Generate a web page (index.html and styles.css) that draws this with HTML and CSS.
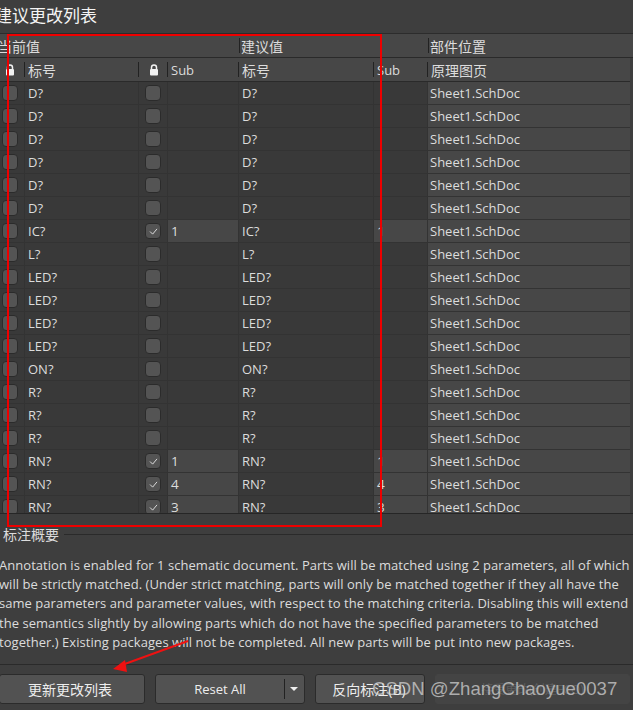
FILE: index.html
```html
<!DOCTYPE html>
<html lang="zh">
<head>
<meta charset="utf-8">
<title>建议更改列表</title>
<link rel="stylesheet" href="styles.css">
</head>
<body>
<div class="page">
  <h1 class="title">建议更改列表</h1>
  <div class="table">
    <div class="group-row">
      <div class="group g1"><span class="shift">当前值</span></div>
      <div class="group g2"><span>建议值</span></div>
      <div class="group g3"><span>部件位置</span></div>
    </div>
    <div class="row head">
      <div class="cell c-lock"><svg class="lock" viewBox="0 0 10 12"><path d="M2.5 5V3.4a2.5 2.5 0 0 1 5 0V5" fill="none" stroke="#f2f2f2" stroke-width="1.5"/><rect x="1" y="5" width="8" height="6.5" rx="1" fill="#f2f2f2"/></svg></div>
      <div class="cell zh">标号</div>
      <div class="cell c-lock"><svg class="lock" viewBox="0 0 10 12"><path d="M2.5 5V3.4a2.5 2.5 0 0 1 5 0V5" fill="none" stroke="#f2f2f2" stroke-width="1.5"/><rect x="1" y="5" width="8" height="6.5" rx="1" fill="#f2f2f2"/></svg></div>
      <div class="cell">Sub</div>
      <div class="cell zh">标号</div>
      <div class="cell">Sub</div>
      <div class="cell zh">原理图页</div>
    </div>
    <div class="row"><div class="cell c-box"><i class="box"></i></div><div class="cell">D?</div><div class="cell c-box"><i class="box"></i></div><div class="cell"></div><div class="cell">D?</div><div class="cell"></div><div class="cell sheet">Sheet1.SchDoc</div></div>
    <div class="row"><div class="cell c-box"><i class="box"></i></div><div class="cell">D?</div><div class="cell c-box"><i class="box"></i></div><div class="cell"></div><div class="cell">D?</div><div class="cell"></div><div class="cell sheet">Sheet1.SchDoc</div></div>
    <div class="row"><div class="cell c-box"><i class="box"></i></div><div class="cell">D?</div><div class="cell c-box"><i class="box"></i></div><div class="cell"></div><div class="cell">D?</div><div class="cell"></div><div class="cell sheet">Sheet1.SchDoc</div></div>
    <div class="row"><div class="cell c-box"><i class="box"></i></div><div class="cell">D?</div><div class="cell c-box"><i class="box"></i></div><div class="cell"></div><div class="cell">D?</div><div class="cell"></div><div class="cell sheet">Sheet1.SchDoc</div></div>
    <div class="row"><div class="cell c-box"><i class="box"></i></div><div class="cell">D?</div><div class="cell c-box"><i class="box"></i></div><div class="cell"></div><div class="cell">D?</div><div class="cell"></div><div class="cell sheet">Sheet1.SchDoc</div></div>
    <div class="row"><div class="cell c-box"><i class="box"></i></div><div class="cell">D?</div><div class="cell c-box"><i class="box"></i></div><div class="cell"></div><div class="cell">D?</div><div class="cell"></div><div class="cell sheet">Sheet1.SchDoc</div></div>
    <div class="row"><div class="cell c-box"><i class="box"></i></div><div class="cell">IC?</div><div class="cell c-box"><i class="box on"><svg viewBox="0 0 10 8"><path d="M1 4l3 3 5-6" fill="none" stroke="#e0e0e0" stroke-width="1.1"/></svg></i></div><div class="cell sub">1</div><div class="cell">IC?</div><div class="cell sub">1</div><div class="cell sheet">Sheet1.SchDoc</div></div>
    <div class="row"><div class="cell c-box"><i class="box"></i></div><div class="cell">L?</div><div class="cell c-box"><i class="box"></i></div><div class="cell"></div><div class="cell">L?</div><div class="cell"></div><div class="cell sheet">Sheet1.SchDoc</div></div>
    <div class="row"><div class="cell c-box"><i class="box"></i></div><div class="cell">LED?</div><div class="cell c-box"><i class="box"></i></div><div class="cell"></div><div class="cell">LED?</div><div class="cell"></div><div class="cell sheet">Sheet1.SchDoc</div></div>
    <div class="row"><div class="cell c-box"><i class="box"></i></div><div class="cell">LED?</div><div class="cell c-box"><i class="box"></i></div><div class="cell"></div><div class="cell">LED?</div><div class="cell"></div><div class="cell sheet">Sheet1.SchDoc</div></div>
    <div class="row"><div class="cell c-box"><i class="box"></i></div><div class="cell">LED?</div><div class="cell c-box"><i class="box"></i></div><div class="cell"></div><div class="cell">LED?</div><div class="cell"></div><div class="cell sheet">Sheet1.SchDoc</div></div>
    <div class="row"><div class="cell c-box"><i class="box"></i></div><div class="cell">LED?</div><div class="cell c-box"><i class="box"></i></div><div class="cell"></div><div class="cell">LED?</div><div class="cell"></div><div class="cell sheet">Sheet1.SchDoc</div></div>
    <div class="row"><div class="cell c-box"><i class="box"></i></div><div class="cell">ON?</div><div class="cell c-box"><i class="box"></i></div><div class="cell"></div><div class="cell">ON?</div><div class="cell"></div><div class="cell sheet">Sheet1.SchDoc</div></div>
    <div class="row"><div class="cell c-box"><i class="box"></i></div><div class="cell">R?</div><div class="cell c-box"><i class="box"></i></div><div class="cell"></div><div class="cell">R?</div><div class="cell"></div><div class="cell sheet">Sheet1.SchDoc</div></div>
    <div class="row"><div class="cell c-box"><i class="box"></i></div><div class="cell">R?</div><div class="cell c-box"><i class="box"></i></div><div class="cell"></div><div class="cell">R?</div><div class="cell"></div><div class="cell sheet">Sheet1.SchDoc</div></div>
    <div class="row"><div class="cell c-box"><i class="box"></i></div><div class="cell">R?</div><div class="cell c-box"><i class="box"></i></div><div class="cell"></div><div class="cell">R?</div><div class="cell"></div><div class="cell sheet">Sheet1.SchDoc</div></div>
    <div class="row"><div class="cell c-box"><i class="box"></i></div><div class="cell">RN?</div><div class="cell c-box"><i class="box on"><svg viewBox="0 0 10 8"><path d="M1 4l3 3 5-6" fill="none" stroke="#e0e0e0" stroke-width="1.1"/></svg></i></div><div class="cell sub">1</div><div class="cell">RN?</div><div class="cell sub">1</div><div class="cell sheet">Sheet1.SchDoc</div></div>
    <div class="row"><div class="cell c-box"><i class="box"></i></div><div class="cell">RN?</div><div class="cell c-box"><i class="box on"><svg viewBox="0 0 10 8"><path d="M1 4l3 3 5-6" fill="none" stroke="#e0e0e0" stroke-width="1.1"/></svg></i></div><div class="cell sub">4</div><div class="cell">RN?</div><div class="cell sub">4</div><div class="cell sheet">Sheet1.SchDoc</div></div>
    <div class="row"><div class="cell c-box"><i class="box"></i></div><div class="cell">RN?</div><div class="cell c-box"><i class="box on"><svg viewBox="0 0 10 8"><path d="M1 4l3 3 5-6" fill="none" stroke="#e0e0e0" stroke-width="1.1"/></svg></i></div><div class="cell sub">3</div><div class="cell">RN?</div><div class="cell sub">3</div><div class="cell sheet">Sheet1.SchDoc</div></div>
  </div>
  <section class="summary">
    <div class="legend"><span>标注概要</span><i class="legend-line"></i></div>
    <p class="desc">Annotation is enabled for 1 schematic document. Parts will be matched using 2 parameters, all of which<br>will be strictly matched. (Under strict matching, parts will only be matched together if they all have the<br>same parameters and parameter values, with respect to the matching criteria. Disabling this will extend<br>the semantics slightly by allowing parts which do not have the specified parameters to be matched<br>together.) Existing packages will not be completed. All new parts will be put into new packages.</p>
  </section>
  <footer class="actions">
    <button class="btn btn-update">更新更改列表</button>
    <div class="btn btn-split"><span class="split-label">Reset All</span><span class="split-arrow"><i class="caret"></i></span></div>
    <button class="btn btn-back">反向标注(B)</button>
    <button class="btn btn-ghost"><span>接受更改(创建ECO)</span></button>
  </footer>
</div>
<div class="red-box"></div>
<svg class="arrow" viewBox="0 0 80 40" width="80" height="40"><path d="M78 1L12 25" stroke="#ee1111" stroke-width="2" fill="none"/><path d="M3 29L15 20 17 32Z" fill="#ee1111"/></svg>
<div class="watermark">CSDN @ZhangChaoyue0037</div>
</body>
</html>
```

FILE: styles.css
```css
* { box-sizing: border-box; }
html, body { margin: 0; height: 100%; }
body {
  background: #3e3e3e;
  color: #dcdcdc;
  font-family: "Open Sans", "Noto Sans CJK SC", sans-serif;
  font-size: 13px;
  overflow: hidden;
  position: relative;
}
.page { width: 633px; height: 710px; display: flex; flex-direction: column; overflow: hidden; }
.title {
  margin: 0 0 0 -5px;
  height: 33px;
  padding-top: 3px;
  font-size: 17px;
  line-height: 24px;
  font-weight: 400;
  color: #f4f4f4;
  font-family: "Noto Sans CJK SC", sans-serif;
}
.table {
  height: 481px;
  overflow: hidden;
  border-top: 1px solid #2c2c2c;
  border-bottom: 1px solid #262626;
  flex: none;
}
.group-row {
  display: grid;
  grid-template-columns: 239px 189px 202px 3px;
  height: 24px;
  background: #474747;
  border-bottom: 1px solid #2a2a2a;
}
.group { display: flex; align-items: center; padding-left: 2px; font-family: "Noto Sans CJK SC", sans-serif; font-size: 14px; position: relative; }
.g1 { padding-left: 0; }
.shift { margin-left: -2px; }
.g2::before, .g3::before { content: ""; position: absolute; left: 0; top: 4px; bottom: 4px; width: 1px; background: #222; }
.row {
  display: grid;
  grid-template-columns: 25px 114px 29px 71px 135px 54px 202px;
  height: 23px;
  width: 630px;
  background: #393939;
  border-bottom: 1px solid #333;
}
.row.head {
  height: 24px;
  background: #474747;
  border-bottom: 1px solid #2a2a2a;
}
.head .cell { border-right: 0; position: relative; padding-left: 3px; }
.head .cell.zh { font-size: 14px; font-family: "Noto Sans CJK SC", sans-serif; }
.head .cell + .cell::before { content: ""; position: absolute; left: -1px; top: 4px; bottom: 4px; width: 1px; background: #222; }
.cell {
  display: flex;
  align-items: center;
  padding-left: 3px;
  line-height: 22px;
  min-width: 0;
  border-right: 1px solid #333;
}
.cell:last-child { border-right: 0; }
.c-lock, .c-box { padding-left: 0; justify-content: center; }
.head .c-lock { padding-left: 0; }
.cell:first-child { padding-right: 5px; }
.lock { width: 10px; height: 12px; display: block; }
.box {
  display: flex;
  align-items: center;
  justify-content: center;
  width: 16px;
  height: 16px;
  background: #545454;
  border: 1px solid #2b2b2b;
  border-radius: 4px;
}
.box svg { width: 9px; height: 7px; display: block; }
.sub { background: #474747; font-size: 13.5px; }
.sheet { background: #474747; padding-left: 2px; }
.summary { height: 150px; flex: none; padding-top: 11px; }
.legend { display: flex; align-items: center; gap: 5px; height: 18px; padding-left: 3px; font-family: "Noto Sans CJK SC", sans-serif; font-size: 14px; }
.legend-line { flex: 1; height: 1px; background: #2a2a2a; }
.desc { margin: 13px 0 0 -1px; line-height: 19.2px; white-space: nowrap; font-size: 13px; letter-spacing: 0.04px; }
.actions {
  border-top: 1px solid #2a2a2a;
  padding: 9px 0 0;
  display: flex;
  gap: 10px;
  height: 46px;
  flex: none;
}
.btn {
  height: 30px;
  background: #525252;
  border: 1px solid #2b2b2b;
  border-radius: 3px;
  color: #ededed;
  font: 14px "Open Sans", "Noto Sans CJK SC", sans-serif;
  padding: 0;
  flex: none;
}
.btn-update { width: 146px; margin-left: -1px; padding-right: 4px; }
.btn-split { width: 150px; display: flex; align-items: center; font-size: 13px; }
.split-label { flex: 1; text-align: center; }
.split-arrow { width: 20px; height: 100%; display: flex; align-items: center; justify-content: center; position: relative; }
.split-arrow::before { content: ""; position: absolute; left: 0; top: 4px; bottom: 4px; width: 1px; background: #222; }
.caret { width: 0; height: 0; border-left: 4px solid transparent; border-right: 4px solid transparent; border-top: 4px solid #eee; }
.btn-back { width: 110px; padding-right: 2px; }
.btn-ghost { width: 195px; background: #444; border-color: #444; color: #5f5f5f; font-size: 12px; }
.red-box {
  position: absolute;
  left: 7px;
  top: 34px;
  width: 375px;
  height: 493px;
  border: 2px solid #ee0000;
  pointer-events: none;
}
.arrow { position: absolute; left: 110px; top: 640px; }
.watermark {
  position: absolute;
  left: 372px;
  top: 678px;
  font: 18.6px "Liberation Sans", sans-serif;
  color: rgba(215,215,215,0.72);
  white-space: nowrap;
}
```
